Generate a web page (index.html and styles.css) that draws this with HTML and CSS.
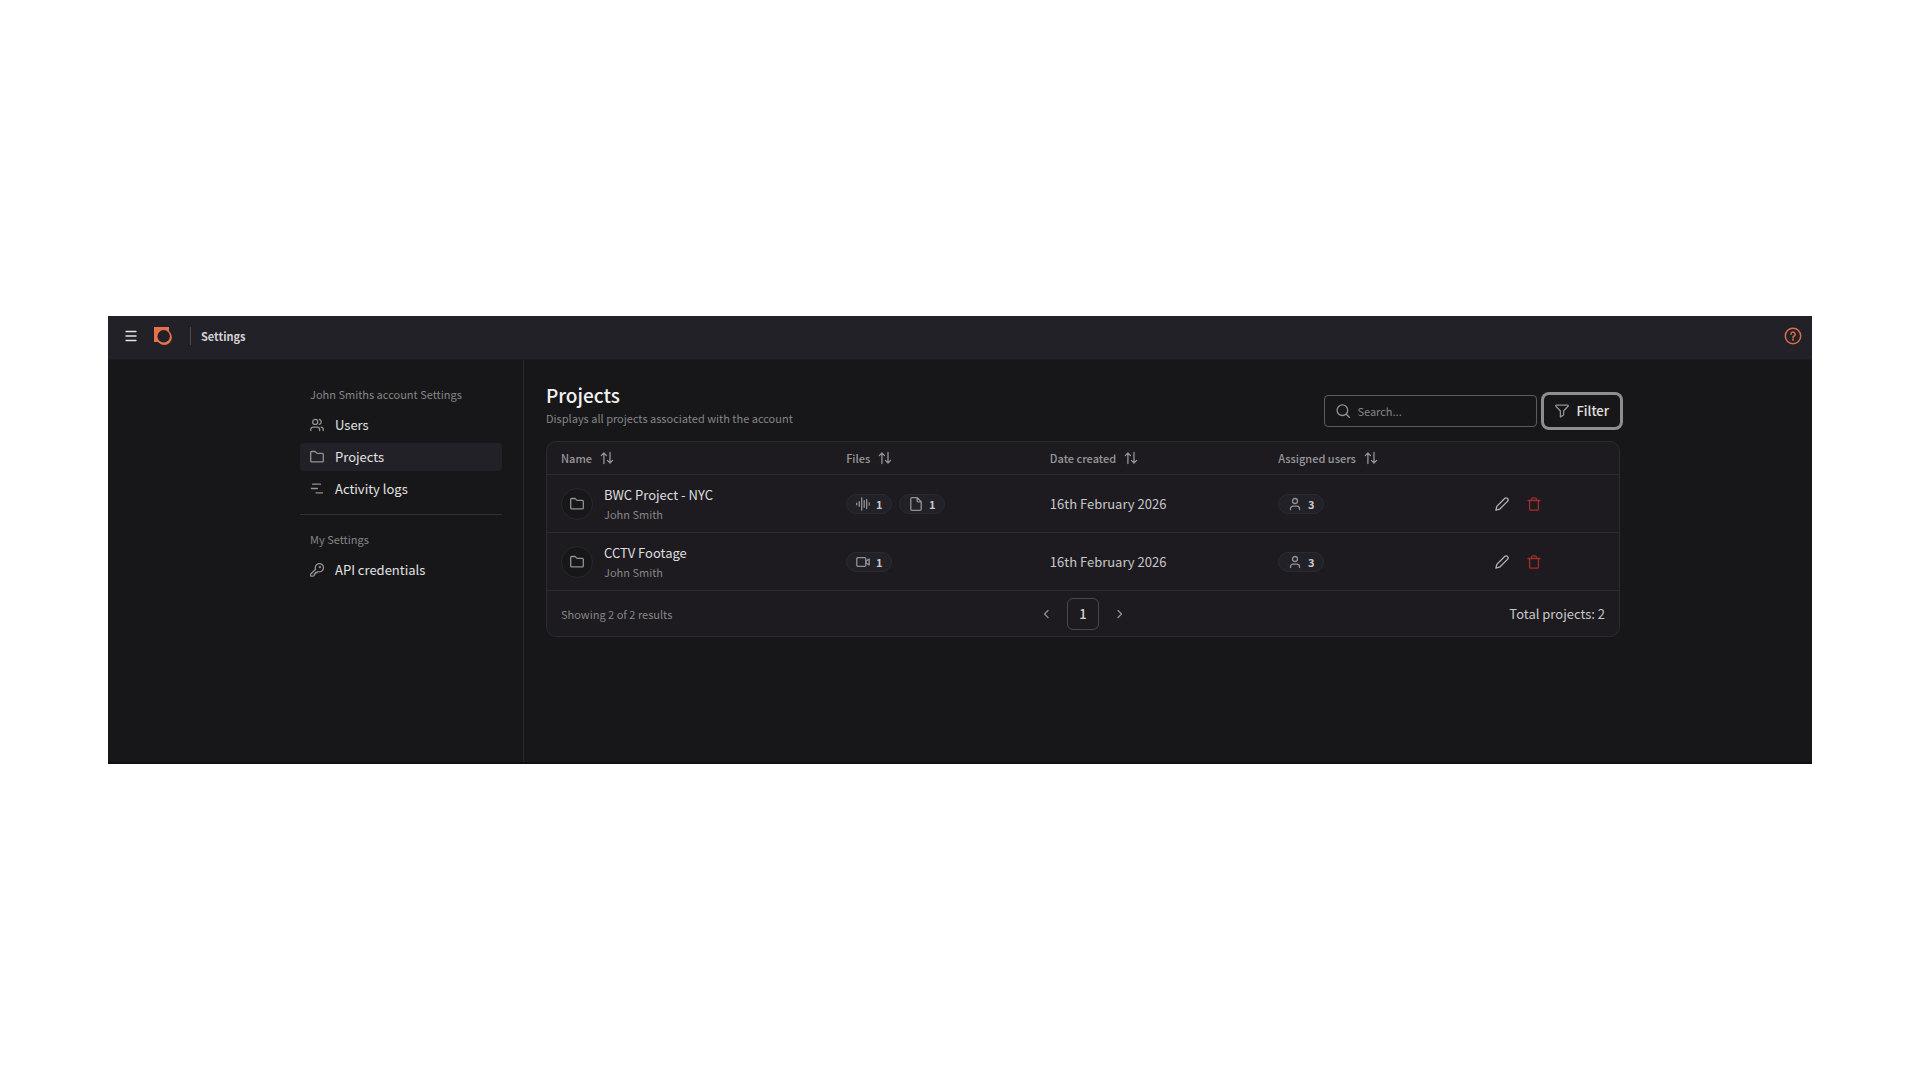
FILE: index.html
```html
<!DOCTYPE html>
<html lang="en">
<head>
<meta charset="utf-8">
<meta name="viewport" content="width=device-width, initial-scale=1">
<title>Settings - Projects</title>
<link rel="stylesheet" href="styles.css">
</head>
<body>
<svg class="sprite" aria-hidden="true">
  <symbol id="folder" viewBox="0 0 14 14"><path d="M.7 10.9V2.500a1 1 0 0 1 1-1h3.100c.4 0 .6.100.8.400l1 1.200c.2.200.4.300.7.300h5a1 1 0 0 1 1 1v6.500a1 1 0 0 1-1 1H1.700a1 1 0 0 1-1-1z"/></symbol>
  <symbol id="sort" viewBox="0 0 14 14"><path d="M3.900 12.500V2M1.300 4.600 3.900 2l2.600 2.600M10 1.500V12M7.400 9.400 10 12l2.600-2.600"/></symbol>
  <symbol id="user" viewBox="0 0 14 14"><circle cx="7" cy="4" r="2.500"/><path d="M2.500 12.600v-.9a2.500 2.500 0 0 1 2.500-2.500h4a2.500 2.500 0 0 1 2.500 2.500v.9"/></symbol>
  <symbol id="pencil" viewBox="0 0 14 14"><path d="M.9 13.100l.9-3.700 8.100-8.100a1.600 1.600 0 0 1 2.300 0l.5.500a1.600 1.600 0 0 1 0 2.300l-8.100 8.100z"/></symbol>
  <symbol id="trash" viewBox="0 0 14 14"><path d="M1 3.500h12M4.600 3.300V2.100A1.400 1.400 0 0 1 6 .8h2a1.400 1.400 0 0 1 1.400 1.300v1.200M2.600 3.500v8.700a1 1 0 0 0 1 1h6.800a1 1 0 0 0 1-1V3.500"/></symbol>
</svg>
<div class="app">
  <header class="topbar">
    <button class="icon-btn menu" aria-label="Menu"><svg viewBox="0 0 12 12"><path d="M.5 1.500h11M.5 6h11M.5 10.500h11"/></svg></button>
    <a class="logo" href="#" aria-label="Home"><svg viewBox="0 0 18 18"><path d="M0 0h15v15H0z"/><circle cx="10.200" cy="10.200" r="7.700"/><circle class="logo-hole" cx="9.700" cy="9.300" r="6.200"/></svg></a>
    <span class="topbar-title">Settings</span>
    <button class="icon-btn help" aria-label="Help"><svg viewBox="0 0 18 18"><circle cx="9" cy="9" r="7.700"/><path d="M6.900 7.200a2.100 2.100 0 1 1 3.200 1.800c-.7.400-1.100.7-1.100 1.500M9 12.100v1.200"/></svg></button>
  </header>
  <div class="content">
    <nav class="sidebar">
      <h2 class="group-title">John Smiths account Settings</h2>
      <ul class="nav-list">
        <li><a class="nav-link" href="#"><svg class="icon" viewBox="0 0 14 14"><circle cx="5.200" cy="3.900" r="2.500"/><path d="M.8 12.600v-1.100a2.400 2.400 0 0 1 2.400-2.400h4a2.400 2.400 0 0 1 2.400 2.400v1.100M9.300 1.400a2.600 2.600 0 0 1 0 5M11.100 9.200a2.400 2.400 0 0 1 2.100 2.400v1"/></svg>Users</a></li>
        <li><a class="nav-link active" href="#" aria-current="page"><svg class="icon"><use href="#folder"/></svg>Projects</a></li>
        <li><a class="nav-link" href="#"><svg class="icon" viewBox="0 0 14 14"><path d="M2.600 2.200h7.900M1.400 6.500h6M6 10.800h6.500"/></svg>Activity logs</a></li>
      </ul>
      <hr class="divider">
      <h2 class="group-title">My Settings</h2>
      <ul class="nav-list">
        <li><a class="nav-link" href="#"><svg class="icon" viewBox="0 0 14 14"><path d="M5.600 6.200a4.100 4.100 0 1 1 2.300 2.300l-1 1H5.600v1.300H4.300v1.300l-1 1H1a.5.5 0 0 1-.5-.5v-1.300z"/><circle cx="9.900" cy="4.200" r=".5"/></svg>API credentials</a></li>
      </ul>
    </nav>
    <main class="main">
      <div class="page-head">
        <div class="heading">
          <h1 class="title">Projects</h1>
          <p class="subtitle">Displays all projects associated with the account</p>
        </div>
        <div class="tools">
          <label class="search"><svg class="icon" viewBox="0 0 14 14"><circle cx="6.400" cy="6.200" r="5.300"/><path d="m10.300 10.200 3 3"/></svg><input class="search-input" type="text" placeholder="Search..." aria-label="Search projects"></label>
          <button class="filter"><svg class="icon" viewBox="0 0 14 14"><path d="M1.300 1.200h11.400c.5 0 .7.600.4 1L8.600 7v4l-3.200 2V7L.9 2.200c-.3-.4-.1-1 .4-1z"/></svg>Filter</button>
        </div>
      </div>
      <section class="card">
        <table class="table">
          <colgroup><col class="col-name"><col class="col-files"><col class="col-date"><col class="col-users"><col></colgroup>
          <thead>
            <tr>
              <th scope="col"><button class="sort">Name<svg class="icon"><use href="#sort"/></svg></button></th>
              <th scope="col"><button class="sort">Files<svg class="icon"><use href="#sort"/></svg></button></th>
              <th scope="col"><button class="sort">Date created<svg class="icon"><use href="#sort"/></svg></button></th>
              <th scope="col"><button class="sort">Assigned users<svg class="icon"><use href="#sort"/></svg></button></th>
              <td></td>
            </tr>
          </thead>
          <tbody>
            <tr>
              <td><div class="project"><span class="avatar"><svg class="icon"><use href="#folder"/></svg></span><div><div class="project-name">BWC Project - NYC</div><div class="owner">John Smith</div></div></div></td>
              <td><div class="badges"><span class="badge"><svg class="icon" viewBox="0 0 14 14"><path d="M.7 6.200v1.600M3.200 4.700v4.600M5.700 1v12M8.200 3.700v6.600M10.700 2.500v9M13.200 6v2"/></svg>1</span><span class="badge"><svg class="icon" viewBox="0 0 14 14"><path d="M8.300.7H3a1.200 1.200 0 0 0-1.200 1.200v10.200A1.200 1.200 0 0 0 3 13.300h8a1.200 1.200 0 0 0 1.200-1.200V4.600zM8.100.9v2.900a1 1 0 0 0 1 1H12"/></svg>1</span></div></td>
              <td>16th February 2026</td>
              <td><div class="badges"><span class="badge"><svg class="icon"><use href="#user"/></svg>3</span></div></td>
              <td><div class="actions"><button class="icon-btn edit" aria-label="Edit"><svg class="icon"><use href="#pencil"/></svg></button><button class="icon-btn delete" aria-label="Delete"><svg class="icon"><use href="#trash"/></svg></button></div></td>
            </tr>
            <tr>
              <td><div class="project"><span class="avatar"><svg class="icon"><use href="#folder"/></svg></span><div><div class="project-name">CCTV Footage</div><div class="owner">John Smith</div></div></div></td>
              <td><div class="badges"><span class="badge"><svg class="icon" viewBox="0 0 14 14"><rect x=".8" y="2.700" width="9" height="8.600" rx="1"/><path d="m9.900 6 3.300-1.900v5.800L9.900 8z"/></svg>1</span></div></td>
              <td>16th February 2026</td>
              <td><div class="badges"><span class="badge"><svg class="icon"><use href="#user"/></svg>3</span></div></td>
              <td><div class="actions"><button class="icon-btn edit" aria-label="Edit"><svg class="icon"><use href="#pencil"/></svg></button><button class="icon-btn delete" aria-label="Delete"><svg class="icon"><use href="#trash"/></svg></button></div></td>
            </tr>
          </tbody>
        </table>
        <footer class="card-foot">
          <span class="showing">Showing 2 of 2 results</span>
          <nav class="pager" aria-label="Pagination">
            <button class="icon-btn" aria-label="Previous page"><svg class="icon" viewBox="0 0 14 14"><path d="M9 3.500 5.500 7 9 10.500"/></svg></button>
            <button class="page" aria-current="page">1</button>
            <button class="icon-btn" aria-label="Next page"><svg class="icon" viewBox="0 0 14 14"><path d="M5 3.500 8.500 7 5 10.500"/></svg></button>
          </nav>
          <span class="total">Total projects: 2</span>
        </footer>
      </section>
    </main>
  </div>
</div>
</body>
</html>
```
FILE: styles.css
```css
* { box-sizing: border-box; margin: 0; padding: 0; }

body {
  min-height: 100vh;
  display: flex;
  align-items: center;
  padding: 0 108px;
  background: #fff;
  color: #d2d2d2;
  font: 400 13px/18px "Noto Sans CJK SC", "Noto Sans", sans-serif;
}

button, input { font: inherit; color: inherit; background: none; border: 0; }
a { color: inherit; text-decoration: none; }
ul { list-style: none; }
svg { display: block; fill: none; stroke: currentColor; stroke-width: 1.3; stroke-linecap: round; stroke-linejoin: round; }

.sprite { display: none; }
.icon { width: 14px; height: 14px; flex: none; color: #929294; }
.icon-btn { display: flex; align-items: center; justify-content: center; }

.app { flex: 1; min-width: 0; background: #171719; border-bottom: 2px solid #0f0f11; }

.topbar {
  display: flex;
  align-items: center;
  height: 44px;
  padding: 0 10px 2px 17px;
  background: #222127;
  border-bottom: 1px solid #1d1c20;
}
.menu { color: #e4e4e4; }
.menu svg { width: 12px; height: 12px; stroke-linecap: butt; }
.logo { margin: 0 18px 0 17px; }
.logo svg { width: 18px; height: 18px; fill: #e6714f; stroke: none; }
.logo-hole { fill: #222127; }
.topbar-title {
  padding-left: 10px;
  border-left: 1px solid #4a494e;
  color: #d2d2d4;
  font-size: 11px;
  font-weight: 700;
}
.help { margin-left: auto; color: #dc6c4e; }
.help svg { width: 18px; height: 18px; stroke-width: 1.5; }

.content { display: flex; max-width: 1320px; margin: 0 auto; }

.sidebar {
  flex: none;
  width: 224px;
  padding: 25px 21px 0 0;
  border-right: 1px solid #29292c;
}
.group-title {
  margin-bottom: 8px;
  padding-left: 10px;
  color: #858587;
  font-size: 11px;
  font-weight: 400;
}
.nav-list { display: grid; gap: 4px; }
.nav-link {
  display: flex;
  align-items: center;
  gap: 11px;
  height: 28px;
  padding: 0 10px;
  border-radius: 4px;
  color: #e2e2e2;
}
.nav-link.active { background: #222127; }
.divider { margin: 11px 0 15px; border: 0; border-top: 1px solid #303033; }

.main { flex: 1; min-width: 0; padding: 22px 0 125px 22px; }
.page-head { display: flex; justify-content: space-between; align-items: flex-end; margin-bottom: 14px; }
.title { color: #f2f2f2; font-size: 19px; line-height: 26px; font-weight: 500; }
.subtitle { padding-top: 1px; color: #858587; font-size: 11px; }
.tools { display: flex; gap: 7px; }
.search {
  display: flex;
  align-items: center;
  gap: 7px;
  width: 213px;
  height: 32px;
  padding: 0 11px;
  border: 1px solid #5c5c5f;
  border-radius: 4px;
}
.search-input { flex: 1; min-width: 0; font-size: 11px; outline: 0; }
.search-input::placeholder { color: #858587; opacity: 1; }
.filter {
  display: flex;
  align-items: center;
  gap: 7px;
  height: 32px;
  padding: 0 11px;
  border-radius: 5px;
  box-shadow: 0 0 0 3px #8e8e8e;
  color: #e2e2e2;
  font-weight: 500;
}

.card { border: 1px solid #2b2b2f; border-radius: 10px; background: #1d1b1f; }
.table { width: 100%; table-layout: fixed; border-collapse: collapse; }
.col-name { width: 26.6%; }
.col-files { width: 19%; }
.col-date { width: 21.3%; }
.col-users { width: 20.2%; }
.table tr { height: 58px; border-bottom: 1px solid #2b2b2f; }
.table thead tr { height: 33px; }
.table th, .table td { padding: 0 0 0 14px; text-align: left; vertical-align: middle; color: #c8c8ca; }
.sort { display: flex; align-items: center; gap: 8px; color: #98989a; font-size: 11px; font-weight: 500; }

.project { display: flex; align-items: center; gap: 11px; }
.avatar {
  display: flex;
  align-items: center;
  justify-content: center;
  width: 32px;
  height: 32px;
  border: 1px solid #29292c;
  border-radius: 50%;
  background: #171719;
}
.project-name { color: #dededf; line-height: 20px; }
.owner { color: #858587; font-size: 11px; }
.badges { display: flex; gap: 7px; }
.badge {
  display: flex;
  align-items: center;
  justify-content: center;
  gap: 6px;
  width: 46px;
  height: 20px;
  border: 1px solid #2b2b2f;
  border-radius: 10px;
  background: #222127;
  font-size: 11px;
  font-weight: 700;
}
.actions { display: flex; gap: 18px; }
.edit .icon { color: #b2b2b4; }
.delete .icon { color: #a32d2b; }

.card-foot { display: grid; grid-template-columns: 1fr auto 1fr; align-items: center; height: 45px; padding: 0 14px; }
.showing { color: #858587; font-size: 11px; }
.pager { display: flex; gap: 14px; }
.page { width: 32px; height: 32px; border: 1px solid #48484c; border-radius: 6px; font-weight: 500; }
.total { text-align: right; color: #c8c8ca; }
```
